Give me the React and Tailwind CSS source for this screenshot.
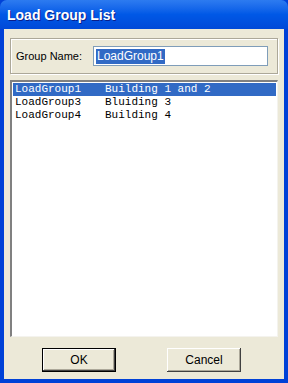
import React from "react";

const rows = [
  { name: "LoadGroup1", desc: "Building 1 and 2", selected: true },
  { name: "LoadGroup3", desc: "Bluiding 3" },
  { name: "LoadGroup4", desc: "Building 4" },
];

const ui = { fontFamily: '"Liberation Sans", Arial, sans-serif' };
const mono = { fontFamily: '"Liberation Mono", "Courier New", monospace' };

const App = () => {
  return (
    <div className="w-[288px] h-[383px] flex flex-col bg-[#0041d7]">
      {/* title bar */}
      <div className="h-[29px] shrink-0 rounded-t-[7px] bg-gradient-to-b from-[#2d7bf0] via-[#0058e6] to-[#0049d8] flex items-center pl-[7px] pt-[1px]">
        <span
          className="text-white font-bold text-[14px] [text-shadow:1px_1px_0_#0a1e8a]"
          style={ui}
        >
          Load Group List
        </span>
      </div>

      {/* client area */}
      <div className="flex-1 mx-[4px] mb-[4px] bg-[#ece9d8] flex flex-col px-[6px] pt-[9px]" style={ui}>
        {/* group box */}
        <div className="h-[36px] border border-[#aca899] shadow-[inset_1px_1px_0_#fff,1px_1px_0_#fff] flex items-center pl-[5px] pr-[9px]">
          <span className="text-[11px] text-black w-[77px]">Group Name:</span>
          <div className="flex-1 h-[20px] bg-white border border-[#7f9db9] flex items-center pl-[2px]">
            <span className="bg-[#316ac5] text-white text-[12px] leading-[15px] px-[1px]">LoadGroup1</span>
          </div>
        </div>

        {/* list box */}
        <div className="mt-[6px] h-[257px] bg-white border-t-2 border-l-2 border-t-[#808080] border-l-[#808080] border-b border-r border-b-[#f4f3ee] border-r-[#f4f3ee] pt-[1px] px-[1px]">
          {rows.map((r) => (
            <div
              key={r.name}
              className={`h-[13px] flex items-center text-[11px] whitespace-pre pl-[2px] ${
                r.selected ? "bg-[#316ac5] text-white" : "text-black"
              }`}
              style={mono}
            >
              <span className="w-[90px]">{r.name}</span>
              <span>{r.desc}</span>
            </div>
          ))}
        </div>

        {/* buttons */}
        <div className="mt-[11px] flex pl-[32px] gap-[51px]">
          <button className="w-[74px] h-[24px] border border-black bg-[#ece9d8] shadow-[inset_-1px_-1px_0_#404040,inset_1px_1px_0_#fff,inset_-2px_-2px_0_#aca899] text-[12px] text-black">
            OK
          </button>
          <button className="w-[74px] h-[24px] bg-[#ece9d8] shadow-[inset_-1px_-1px_0_#404040,inset_1px_1px_0_#fff,inset_-2px_-2px_0_#aca899] text-[12px] text-black">
            Cancel
          </button>
        </div>
      </div>
    </div>
  );
};

export default App;
